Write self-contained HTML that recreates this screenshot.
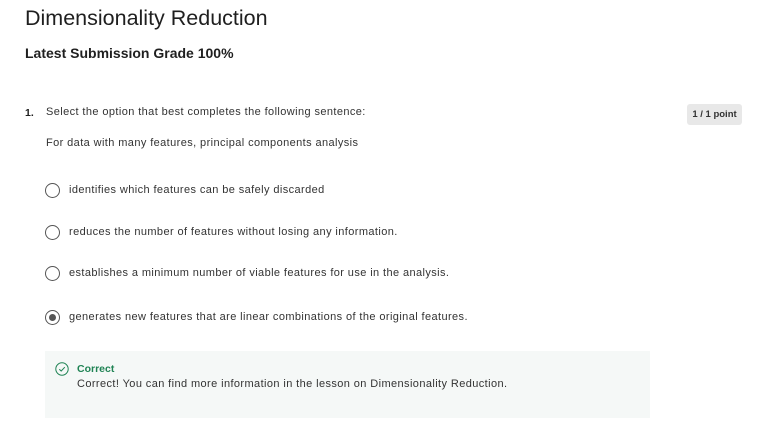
<!DOCTYPE html>
<html><head><meta charset="utf-8"><style>
*{margin:0;padding:0;box-sizing:border-box}
body{width:776px;height:447px;background:#fff;font-family:"Liberation Sans",sans-serif;color:#1f1f1f;position:relative;overflow:hidden}
.a{position:absolute;white-space:nowrap}
.t{left:25px;top:6px;font-size:21.5px;color:#1f1f1f}
.s{left:25px;top:45px;font-size:14px;font-weight:bold;color:#1f1f1f}
.q{font-size:11px;letter-spacing:0.4px;color:#333}
.r{position:absolute;width:15px;height:15px;border:1.5px solid #555;border-radius:50%;left:45px}
.badge{left:687px;top:104px;width:55px;height:21px;background:#e8e8e8;border-radius:3px;font-size:9.5px;font-weight:bold;text-align:center;line-height:21px;color:#333}
.box{position:absolute;left:45px;top:351px;width:605px;height:67px;background:#f5f8f7}
</style></head><body>
<div class="a t">Dimensionality Reduction</div>
<div class="a s">Latest Submission Grade 100%</div>
<div class="a" style="left:25px;top:107px;font-size:10.5px;font-weight:bold">1.</div>
<div class="a q" style="left:46px;top:106px">Select the option that best completes the following sentence:</div>
<div class="a badge">1 / 1 point</div>
<div class="a q" style="left:46px;top:137px">For data with many features, principal components analysis</div>
<div class="r" style="top:183px"></div><div class="a q" style="left:69px;top:184px">identifies which features can be safely discarded</div>
<div class="r" style="top:225px"></div><div class="a q" style="left:69px;top:226px">reduces the number of features without losing any information.</div>
<div class="r" style="top:266px"></div><div class="a q" style="left:69px;top:267px">establishes a minimum number of viable features for use in the analysis.</div>
<div class="r" style="top:310px"></div><div style="position:absolute;left:49px;top:314px;width:7px;height:7px;border-radius:50%;background:#555"></div>
<div class="a q" style="left:69px;top:311px">generates new features that are linear combinations of the original features.</div>
<div class="box"></div>
<svg class="a" style="left:55px;top:362px" width="14" height="14" viewBox="0 0 14 14"><circle cx="7" cy="7" r="6.2" fill="none" stroke="#1f8354" stroke-width="1"/><path d="M4.3 7.2 L6.2 9 L9.8 5.2" fill="none" stroke="#1f8354" stroke-width="1"/></svg>
<div class="a" style="left:77px;top:363px;font-size:10.5px;font-weight:bold;color:#1f8354">Correct</div>
<div class="a q" style="left:77px;top:378px">Correct! You can find more information in the lesson on Dimensionality Reduction.</div>
</body></html>
